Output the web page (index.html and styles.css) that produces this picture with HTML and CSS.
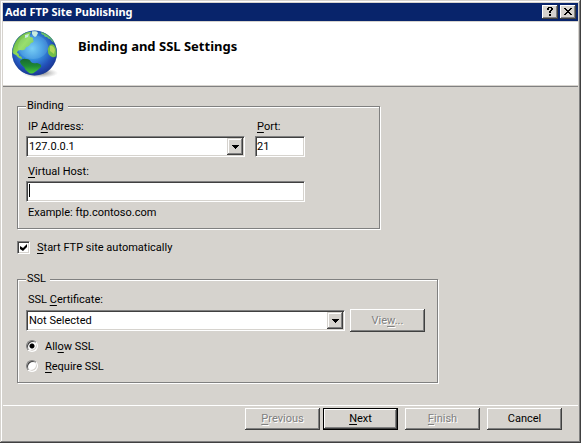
FILE: index.html
```html
<!DOCTYPE html>
<html lang="en">
<head>
<meta charset="utf-8">
<title>Add FTP Site Publishing</title>
<link rel="stylesheet" href="styles.css">
</head>
<body>
<form class="window">
  <header class="titlebar">
    <span class="titlebar-text">Add FTP Site Publishing</span>
    <button type="button" class="caption-button" aria-label="Help">
      <svg width="8" height="9" viewBox="0 0 8 9" shape-rendering="crispEdges"><path d="M2 0h4v1H2zM1 1h2v2H1zM5 1h2v2H5zM4 3h2v1H4zM3 4h2v2H3zM3 7h2v2H3z"/></svg>
    </button>
    <button type="button" class="caption-button" aria-label="Close">
      <svg width="8" height="7" viewBox="0 0 8 7" shape-rendering="crispEdges"><path d="M0 0h2v1H0zM6 0h2v1H6zM1 1h2v1H1zM5 1h2v1H5zM2 2h4v1H2zM3 3h2v1H3zM2 4h4v1H2zM1 5h2v1H1zM5 5h2v1H5zM0 6h2v1H0zM6 6h2v1H6z"/></svg>
    </button>
  </header>

  <div class="banner">
    <svg class="globe" width="48" height="50" viewBox="0 0 48 50" aria-hidden="true">
      <defs>
        <radialGradient id="ocean" cx="45%" cy="40%" r="62%">
          <stop offset="0" stop-color="#6cc8f4"/>
          <stop offset=".4" stop-color="#3790de"/>
          <stop offset=".75" stop-color="#2250b8"/>
          <stop offset="1" stop-color="#1c3290"/>
        </radialGradient>
        <radialGradient id="shade">
          <stop offset="0" stop-color="#555" stop-opacity=".8"/>
          <stop offset="1" stop-color="#888" stop-opacity="0"/>
        </radialGradient>
        <linearGradient id="north" x1="0" y1="0" x2="1" y2="1">
          <stop offset="0" stop-color="#4f9f45"/>
          <stop offset=".5" stop-color="#93dc55"/>
          <stop offset="1" stop-color="#55b84a"/>
        </linearGradient>
        <linearGradient id="south" x1="0" y1="0" x2="0" y2="1">
          <stop offset="0" stop-color="#17692f"/>
          <stop offset=".5" stop-color="#1f8a34"/>
          <stop offset="1" stop-color="#4cc93c"/>
        </linearGradient>
        <clipPath id="sphere"><circle cx="23.500" cy="23" r="22.500"/></clipPath>
      </defs>
      <ellipse cx="29" cy="43" rx="18" ry="5" fill="url(#shade)"/>
      <circle cx="23.500" cy="23" r="22.500" fill="url(#ocean)"/>
      <g clip-path="url(#sphere)">
        <path fill="url(#north)" d="M1 22Q3 10 10 5Q15 1 20 2Q18 5 19 7Q23 7 22 10Q24 12 20 13Q18 17 15 17Q14 21 10 20Q6 20 6 23Q8 23 8 26Q11 26 11 29Q8 29 5 25Q3 25 1 22z"/>
        <path fill="#c9ecdf" d="M21 1Q26 0 27 3Q26 6 24 7Q22 6 21 4zM14 5l4-1-1 3-3 1z"/>
        <path fill="#6cc66a" d="M30 2Q36 2 40 7Q43 9 44 13Q41 12 39 9Q37 9 36 7Q33 7 33 5Q30 5 30 2z"/>
        <path fill="#72bf48" d="M38 16Q40 13 43 15Q46 18 46 25Q44 28 41 27Q37 25 37 22Q36 19 38 16z"/>
        <path fill="#b4d75b" d="M39 16q3-1 5 4l-1 4-4-3z"/>
        <path fill="url(#south)" d="M9 31Q12 28 15 29Q19 29 20 32Q22 34 26 33Q31 34 30 37Q27 40 24 42Q20 45 17 42Q14 40 13 37Q9 34 9 31z"/>
        <ellipse cx="22" cy="17" rx="15" ry="12" fill="#bff0ff" opacity=".14"/>
      </g>
      <circle cx="23.500" cy="23" r="22" fill="none" stroke="#174a90" stroke-opacity=".4"/>
    </svg>
    <h1 class="banner-title">Binding and SSL Settings</h1>
  </div>

  <main class="content">
    <fieldset class="group group-binding">
      <legend>Binding</legend>
      <div class="row">
        <div class="field field-grow">
          <label for="ip">IP <u>A</u>ddress:</label>
          <span class="combo">
            <select id="ip"><option>127.0.0.1</option></select>
            <span class="combo-arrow"><svg width="7" height="4" viewBox="0 0 7 4" shape-rendering="crispEdges"><path d="M0 0h7v1H0zM1 1h5v1H1zM2 2h3v1H2zM3 3h1v1H3z"/></svg></span>
          </span>
        </div>
        <div class="field field-port">
          <label for="port"><u>P</u>ort:</label>
          <input class="textbox" id="port" type="text" value="21">
        </div>
      </div>
      <div class="field field-host">
        <label for="host"><u>V</u>irtual Host:</label>
        <span class="caret-box"><input class="textbox" id="host" type="text"><span class="caret"></span></span>
      </div>
      <p class="hint">Example: ftp.contoso.com</p>
    </fieldset>

    <div class="check-row">
      <input class="checkbox" id="autostart" type="checkbox" checked>
      <label for="autostart"><u>S</u>tart FTP site automatically</label>
    </div>

    <fieldset class="group group-ssl">
      <legend>SSL</legend>
      <label class="field-label" for="cert">SSL <u>C</u>ertificate:</label>
      <div class="cert-row">
        <span class="combo">
          <select id="cert"><option>Not Selected</option></select>
          <span class="combo-arrow"><svg width="7" height="4" viewBox="0 0 7 4" shape-rendering="crispEdges"><path d="M0 0h7v1H0zM1 1h5v1H1zM2 2h3v1H2zM3 3h1v1H3z"/></svg></span>
        </span>
        <button type="button" class="button" disabled>Vie<u>w</u>...</button>
      </div>
      <div class="radios">
        <div class="radio-row"><input class="radio" id="allow" type="radio" name="ssl" checked><label for="allow">All<u>o</u>w SSL</label></div>
        <div class="radio-row"><input class="radio" id="require" type="radio" name="ssl"><label for="require"><u>R</u>equire SSL</label></div>
      </div>
    </fieldset>
  </main>

  <footer class="footer">
    <div class="pair">
      <button type="button" class="button" disabled><u>P</u>revious</button>
      <button type="button" class="button button-default"><u>N</u>ext</button>
    </div>
    <button type="button" class="button" disabled><u>F</u>inish</button>
    <button type="button" class="button">Cancel</button>
  </footer>
</form>
</body>
</html>
```
FILE: styles.css
```css
:root {
  --face: #d6d3ce;
  --shadow: #808080;
  --dark: #404040;
  --navy: #08246b;
}

* { box-sizing: border-box; }

body {
  margin: 0;
  background: var(--face);
  color: #000;
  font: 11px/14px Tahoma, Roboto, sans-serif;
}

button, input, select { font: inherit; color: inherit; margin: 0; }

u { text-underline-offset: 2px; text-decoration-thickness: 1px; text-decoration-skip-ink: none; }

.window {
  display: flex;
  flex-direction: column;
  min-height: 100vh;
  padding: 3px;
  background: var(--face);
  box-shadow: inset -1px -1px var(--dark), inset 1px 1px var(--face),
    inset -2px -2px var(--shadow), inset 2px 2px #fff;
}

.titlebar {
  display: flex;
  align-items: center;
  height: 18px;
  padding: 0 2px;
  background: var(--navy);
  color: #fff;
  font-family: Tahoma, "Noto Sans", sans-serif;
  font-weight: bold;
}
.titlebar-text { flex: 1; }

.caption-button {
  display: flex;
  align-items: center;
  justify-content: center;
  width: 16px;
  height: 14px;
  padding: 0 1px 1px 0;
  border: 0;
  color: #000;
  background: var(--face);
  box-shadow: inset -1px -1px var(--dark), inset 1px 1px #fff, inset -2px -2px var(--shadow);
}
.caption-button + .caption-button { margin-left: 2px; }

.banner {
  display: flex;
  align-items: flex-start;
  gap: 19px;
  height: 65px;
  margin-top: 1px;
  padding: 8px;
  background: #fff;
  border-bottom: 1px solid var(--shadow);
  box-shadow: inset 0 -1px var(--face);
}
.banner-title {
  margin: 8px 0 0;
  font-family: Tahoma, "Noto Sans", sans-serif;
  font-size: 13px;
  line-height: 16px;
}

.content { padding: 12px 14px; }

.group {
  min-width: 0;
  max-width: 100%;
  margin: 0;
  padding: 7px 8px 8px;
  border: 1px solid var(--shadow);
  box-shadow: 1px 1px #fff, inset 1px 1px #fff;
}
.group-binding { width: 363px; }
.group-ssl { width: 421px; }
legend {
  padding: 0 4px 0 1px;
  background: var(--face);
}

.row { display: flex; gap: 10px; width: 279px; }
.field { display: flex; flex-direction: column; gap: 2px; }
.field label, .field-label { padding-left: 2px; }
.field-grow { flex: 1; }
.field-port { width: 50px; }
.field-host { width: 279px; margin-top: 8px; }
.hint { margin: 4px 0 0; padding-left: 2px; }

.textbox, .combo {
  width: 100%;
  height: 21px;
  border: 1px solid;
  border-color: var(--shadow) #fff #fff var(--shadow);
  border-radius: 0;
  background: #fff;
  box-shadow: inset 1px 1px var(--dark), inset -1px -1px var(--face);
}
.textbox { padding: 0 1px; outline: 0; }

.combo { position: relative; display: flex; }
.combo select {
  flex: 1;
  appearance: none;
  padding: 0 20px 0 2px;
  border: 0;
  background: transparent;
  outline: 0;
}
.combo-arrow {
  position: absolute;
  top: 1px;
  right: 1px;
  bottom: 1px;
  display: flex;
  align-items: center;
  justify-content: center;
  width: 16px;
  background: var(--face);
  box-shadow: inset -1px -1px var(--dark), inset 1px 1px var(--face),
    inset -2px -2px var(--shadow), inset 2px 2px #fff;
  pointer-events: none;
}

.caret-box { position: relative; display: flex; }
.caret {
  position: absolute;
  top: 3px;
  left: 3px;
  width: 1px;
  height: 13px;
  background: #000;
}

.check-row {
  display: flex;
  align-items: flex-end;
  gap: 7px;
  margin: 12px 0 17px;
}
.checkbox {
  appearance: none;
  width: 13px;
  height: 13px;
  margin-bottom: 1px;
  border: 1px solid;
  border-color: var(--shadow) #fff #fff var(--shadow);
  background: #fff;
  box-shadow: inset 1px 1px var(--dark), inset -1px -1px var(--face);
  display: grid;
  place-items: center;
}
.checkbox:checked::before {
  content: "";
  width: 7px;
  height: 7px;
  background: #000;
  clip-path: polygon(0 2px, 3px 4px, 7px 0, 7px 3px, 3px 7px, 0 5px);
}

.cert-row {
  display: flex;
  align-items: center;
  gap: 5px;
  width: 399px;
  margin-top: 2px;
}
.field-label { display: block; }
.cert-row .combo { flex: 1; }

.radios { display: grid; gap: 6px; margin-top: 8px; }
.radio-row { display: flex; gap: 7px; }
.radio {
  appearance: none;
  width: 12px;
  height: 12px;
  border: 1px solid;
  border-color: var(--shadow) #fff #fff var(--shadow);
  border-radius: 50%;
  background: #fff;
  box-shadow: inset 1px 1px var(--dark), inset -1px -1px var(--face);
}
.radio:checked { background: radial-gradient(circle at 50% 50%, #000 2px, #fff 3px); }

.button {
  width: 75px;
  height: 23px;
  padding: 0;
  border: 0;
  background: var(--face);
  box-shadow: inset -1px -1px var(--dark), inset 1px 1px #fff, inset -2px -2px var(--shadow);
}
.button:disabled { color: var(--shadow); text-shadow: 1px 1px #fff; }
.button-default {
  border: 1px solid #000;
}

.footer {
  display: flex;
  justify-content: flex-end;
  gap: 7px;
  margin-top: auto;
  padding: 2px 16px 10px;
  border-top: 1px solid #fff;
}
.pair { display: flex; gap: 3px; }
.footer .button { height: 22px; }
```
